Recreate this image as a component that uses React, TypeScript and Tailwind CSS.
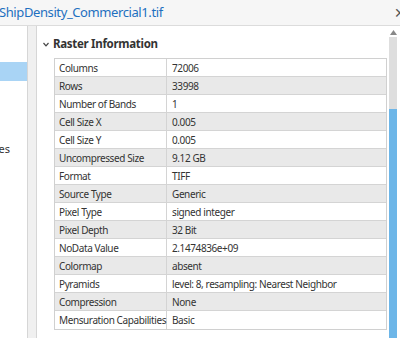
import React from "react";

const rows: [string, string][] = [
  ["Columns", "72006"],
  ["Rows", "33998"],
  ["Number of Bands", "1"],
  ["Cell Size X", "0.005"],
  ["Cell Size Y", "0.005"],
  ["Uncompressed Size", "9.12 GB"],
  ["Format", "TIFF"],
  ["Source Type", "Generic"],
  ["Pixel Type", "signed integer"],
  ["Pixel Depth", "32 Bit"],
  ["NoData Value", "2.1474836e+09"],
  ["Colormap", "absent"],
  ["Pyramids", "level: 8, resampling: Nearest Neighbor"],
  ["Compression", "None"],
  ["Mensuration Capabilities", "Basic"],
];

export default function App() {
  return (
    <div
      className="w-[400px] h-[338px] overflow-hidden bg-[#f0f0f0] flex flex-col text-[#333]"
      style={{ fontFamily: '"Noto Sans", "Open Sans", sans-serif' }}
    >
      {/* title bar */}
      <div className="h-[26px] shrink-0 flex items-center justify-between bg-[#f6f6f6] border-b border-[#dcdcdc]">
        <span className="ml-[-1px] text-[13px] tracking-[-0.4px] leading-none text-[#1e70c0] whitespace-nowrap">
          ShipDensity_Commercial1.tif
        </span>
        <span className="mr-[-6px] text-[14px] leading-none text-[#555]">✕</span>
      </div>

      <div className="flex-1 flex min-h-0">
        {/* side list */}
        <div className="w-[28px] shrink-0 bg-white border-r border-[#d6d6d6] flex flex-col overflow-hidden">
          <div className="h-[36px]" />
          <div className="h-[19px] bg-[#a9d4f5]" />
          <div className="h-[62px]" />
          <div className="w-[10px] flex justify-end">
            <span className="text-[11px] leading-none whitespace-nowrap">Processing Templates</span>
          </div>
        </div>

        <div className="w-[8px] shrink-0" />

        {/* main panel */}
        <div className="flex-1 bg-white border-l border-[#d6d6d6] flex min-w-0">
          <div className="flex-1 flex flex-col min-w-0">
            <div className="h-[32px] shrink-0 flex items-center pl-[6px] pt-[4px] gap-[4px]">
              <svg width="6" height="5" viewBox="0 0 6 5" className="mt-[1px]">
                <path d="M0.5 1 L3 3.8 L5.5 1" fill="none" stroke="#444" strokeWidth="1.2" />
              </svg>
              <span className="text-[11.5px] tracking-[-0.3px] font-bold text-[#333] leading-none">
                Raster Information
              </span>
            </div>
            <div className="ml-[17px] mr-[2px] border border-[#d0d0d0]">
              {rows.map(([k, v], i) => (
                <div
                  key={k}
                  className={`h-[18px] flex text-[10px] tracking-[-0.4px] leading-none text-[#333] border-b last:border-b-0 border-[#d4d4d4] ${
                    i % 2 === 1 ? "bg-[#e9e9e9]" : "bg-white"
                  }`}
                >
                  <div className="w-[112px] shrink-0 flex items-center pl-[4px] border-r border-[#d4d4d4] whitespace-nowrap">
                    {k}
                  </div>
                  <div className="flex-1 flex items-center pl-[5px] whitespace-nowrap">{v}</div>
                </div>
              ))}
            </div>
          </div>

          {/* scrollbar */}
          <div className="w-[8px] shrink-0 flex flex-col mr-[3px]">
            <div className="h-[11px] flex items-end justify-center pb-[2px]">
              <svg width="7" height="5" viewBox="0 0 7 5">
                <path d="M0 5 L3.5 0 L7 5 Z" fill="#888" />
              </svg>
            </div>
            <div className="h-[72px] bg-[#dedede]" />
            <div className="flex-1 bg-[#6db6e8]" />
          </div>
        </div>
      </div>
    </div>
  );
}
